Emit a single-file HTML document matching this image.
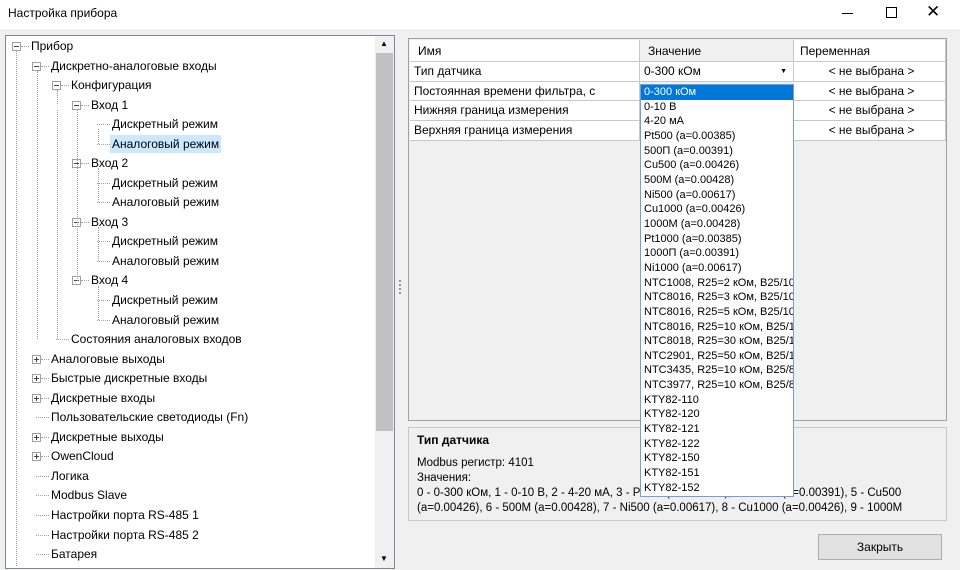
<!DOCTYPE html><html><head><meta charset="utf-8"><style>
*{margin:0;padding:0;box-sizing:border-box}
body{width:960px;height:570px;background:#f0f0f0;font-family:"Segoe UI","Liberation Sans","DejaVu Sans",sans-serif;font-size:12px;color:#000;position:relative;overflow:hidden}
.a{position:absolute;white-space:nowrap}
.tb{left:0;top:0;width:960px;height:29px;background:#fff}
.tree{left:5px;top:35px;width:390px;height:534px;background:#fff;border:1px solid #828790}
.ti{position:absolute;height:18px;line-height:18px;font-size:12px}
.bx{position:absolute;width:9px;height:9px;border:1px solid #a0a0a0;background:#fff}
.bx:before{content:"";position:absolute;left:1px;top:3px;width:5px;height:1px;background:#444}
.bx.p:after{content:"";position:absolute;left:3px;top:1px;width:1px;height:5px;background:#444}
.vl{position:absolute;border-left:1px dotted #a0a0a0;width:0}
.hl{position:absolute;border-top:1px dotted #a0a0a0;height:0}
.grid{left:408px;top:38px;width:539px;height:383px;background:#f0f0f0;border:1px solid #a0a0a0}
.cell{position:absolute;height:20px;line-height:19px;border-right:1px solid #c8c8c8;border-bottom:1px solid #c8c8c8;padding-left:4px;background:#fff}
.dd{left:640px;top:84px;width:154px;height:413px;background:#fff;border:1px solid #7a9cd3}
.dd div{height:14.67px;line-height:14.67px;padding-left:3px;font-size:11px;overflow:hidden}
</style></head><body>
<div class="a tb"></div>
<div class="a" style="left:8px;top:6px;font-size:12px">Настройка прибора</div>
<div class="a" style="left:842px;top:13px;width:11px;height:1px;background:#000"></div>
<div class="a" style="left:886px;top:7px;width:11px;height:11px;border:1px solid #000"></div>
<div class="a" style="left:926px;top:2px;font-size:17px;font-weight:300">✕</div>

<div class="a tree">
<div class="a" style="left:369px;top:0;width:19px;height:532px;background:#f0f0f0"></div>
<div class="a" style="left:370px;top:17px;width:17px;height:378px;background:#c1c1c1"></div>
<div class="a" style="left:374px;top:3px;font-size:8px">▲</div>
<div class="a" style="left:374px;top:518px;font-size:8px">▼</div>
</div>
<div id="t"></div>
<div class="a" style="left:399px;top:280px;width:2px;height:14px;border-left:2px dotted #999"></div>

<div class="a grid"></div>
<div class="cell a" style="left:410px;top:40px;width:230px;height:22px;line-height:22px;padding-left:8px;background:#fff">Имя</div>
<div class="cell a" style="left:640px;top:40px;width:154px;height:22px;line-height:22px;padding-left:8px;background:#f0f0f0">Значение</div>
<div class="cell a" style="left:794px;top:40px;width:152px;height:22px;line-height:22px;padding-left:6px;background:#fff">Переменная</div>
<div class="cell a" style="left:410px;top:62px;width:230px">Тип датчика</div>
<div class="cell a" style="left:640px;top:62px;width:154px">0-300 кОм<span style="position:absolute;right:6px;font-size:7px">▼</span></div>
<div class="cell a" style="left:794px;top:62px;width:152px;text-align:center">&lt; не выбрана &gt;</div>
<div class="cell a" style="left:410px;top:82px;width:230px;height:19px">Постоянная времени фильтра, с</div>
<div class="cell a" style="left:794px;top:82px;width:152px;height:19px;text-align:center">&lt; не выбрана &gt;</div>
<div class="cell a" style="left:410px;top:101px;width:230px">Нижняя граница измерения</div>
<div class="cell a" style="left:794px;top:101px;width:152px;text-align:center">&lt; не выбрана &gt;</div>
<div class="cell a" style="left:410px;top:121px;width:230px">Верхняя граница измерения</div>
<div class="cell a" style="left:794px;top:121px;width:152px;text-align:center">&lt; не выбрана &gt;</div>

<div class="a" style="left:408px;top:427px;width:539px;height:94px;border:1px solid #c8c8c8;background:#f0f0f0"></div>
<div class="a" style="left:417px;top:433px;font-weight:bold">Тип датчика</div>
<div class="a" style="left:417px;top:456px;line-height:15px;font-size:11.5px">Modbus регистр: 4101<br>Значения:<br>0 - 0-300 кОм, 1 - 0-10 В, 2 - 4-20 мА, 3 - Pt500 (a=0.00385), 4 - 500П (a=0.00391), 5 - Cu500<br>(a=0.00426), 6 - 500М (a=0.00428), 7 - Ni500 (a=0.00617), 8 - Cu1000 (a=0.00426), 9 - 1000М</div>

<div class="a dd">
<div style="background:#0078d7;color:#fff">0-300 кОм</div><div>0-10 В</div><div>4-20 мА</div><div>Pt500 (a=0.00385)</div><div>500П (a=0.00391)</div><div>Cu500 (a=0.00426)</div><div>500М (a=0.00428)</div><div>Ni500 (a=0.00617)</div><div>Cu1000 (a=0.00426)</div><div>1000М (a=0.00428)</div><div>Pt1000 (a=0.00385)</div><div>1000П (a=0.00391)</div><div>Ni1000 (a=0.00617)</div><div>NTC1008, R25=2 кОм, B25/100</div><div>NTC8016, R25=3 кОм, B25/100</div><div>NTC8016, R25=5 кОм, B25/100</div><div>NTC8016, R25=10 кОм, B25/100</div><div>NTC8018, R25=30 кОм, B25/100</div><div>NTC2901, R25=50 кОм, B25/100</div><div>NTC3435, R25=10 кОм, B25/85</div><div>NTC3977, R25=10 кОм, B25/85</div><div>KTY82-110</div><div>KTY82-120</div><div>KTY82-121</div><div>KTY82-122</div><div>KTY82-150</div><div>KTY82-151</div><div>KTY82-152</div>
</div>

<div class="a" style="left:818px;top:534px;width:124px;height:26px;border:1px solid #adadad;background:#e1e1e1;text-align:center;line-height:24px">Закрыть</div>

<script>
var items=[[0,'Прибор','m'],[1,'Дискретно-аналоговые входы','m'],[2,'Конфигурация','m'],[3,'Вход 1','m'],[4,'Дискретный режим'],[4,'Аналоговый режим','s'],[3,'Вход 2','m'],[4,'Дискретный режим'],[4,'Аналоговый режим'],[3,'Вход 3','m'],[4,'Дискретный режим'],[4,'Аналоговый режим'],[3,'Вход 4','m'],[4,'Дискретный режим'],[4,'Аналоговый режим'],[2,'Состояния аналоговых входов'],[1,'Аналоговые выходы','p'],[1,'Быстрые дискретные входы','p'],[1,'Дискретные входы','p'],[1,'Пользовательские светодиоды (Fn)'],[1,'Дискретные выходы','p'],[1,'OwenCloud','p'],[1,'Логика'],[1,'Modbus Slave'],[1,'Настройки порта RS-485 1'],[1,'Настройки порта RS-485 2'],[1,'Батарея']];
var h='';
items.forEach(function(it,i){var y=46+i*19.54,l=it[0];var tx=[31,51,71,91,112][l];var bx=tx-19;
if(it[2]=='m'||it[2]=='p')h+='<div class="bx'+(it[2]=='p'?' p':'')+'" style="left:'+bx+'px;top:'+(y-4)+'px"></div><div class="hl" style="left:'+(bx+9)+'px;top:'+y+'px;width:'+(tx-bx-11)+'px"></div>';
else h+='<div class="hl" style="left:'+(bx+4)+'px;top:'+y+'px;width:'+(tx-bx-6)+'px"></div>';
h+='<div class="ti" style="left:'+(tx-2)+'px;top:'+(y-9)+'px;padding:0 2px;'+(it[2]=='s'?'background:#cce8ff':'')+'">'+it[1]+'</div>';});
h+='<div class="vl" style="left:16px;top:51px;height:515px"></div><div class="vl" style="left:37px;top:71px;height:268px"></div><div class="vl" style="left:57px;top:90px;height:14px"></div><div class="vl" style="left:77px;top:110px;height:171px"></div><div class="vl" style="left:98px;top:129px;height:15px"></div><div class="vl" style="left:98px;top:168px;height:34px"></div><div class="vl" style="left:98px;top:227px;height:34px"></div><div class="vl" style="left:98px;top:286px;height:34px"></div><div class="vl" style="left:57px;top:110px;height:229px"></div>';
document.getElementById('t').innerHTML=h;
</script>
</body></html>
